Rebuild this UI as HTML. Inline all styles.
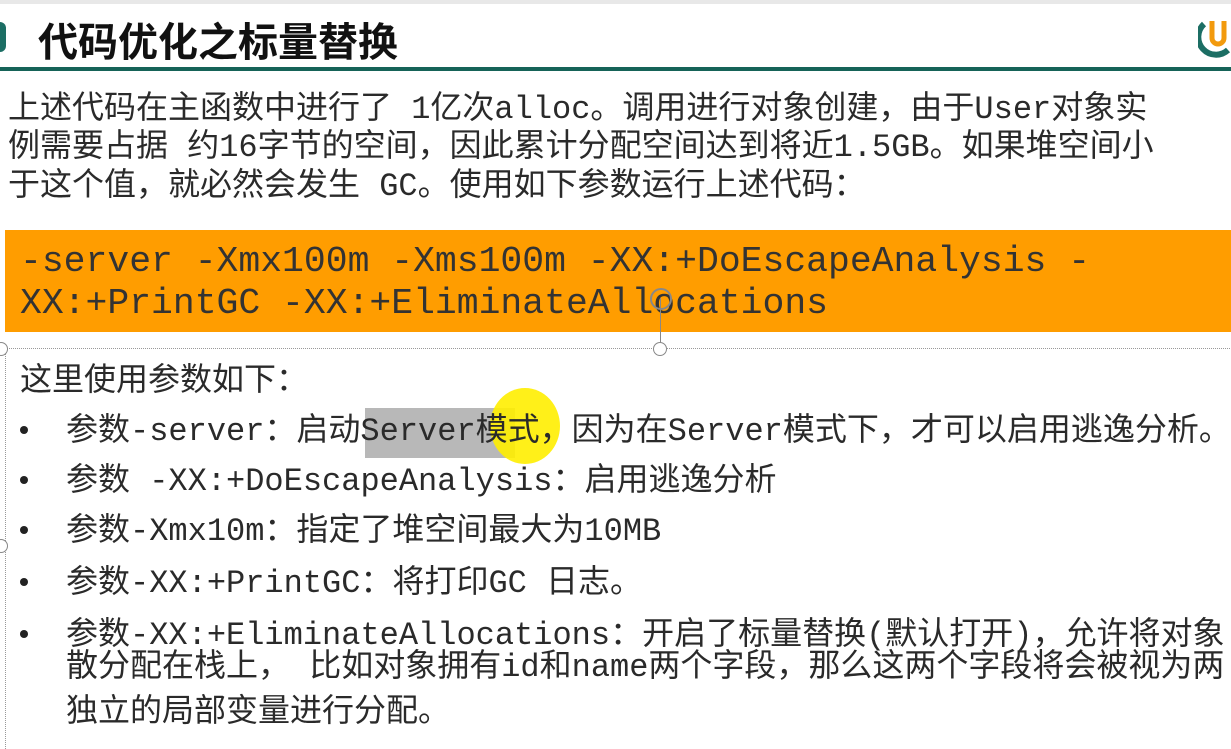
<!DOCTYPE html>
<html><head><meta charset="utf-8"><style>
body{margin:0;width:1231px;height:731px;overflow:hidden;background:#fff;position:relative;font-family:"Liberation Mono","Noto Sans CJK SC",monospace;color:#2a2a2a}
.t{position:absolute;white-space:nowrap;line-height:1.2}
.p{font-size:32px;left:8px}
.b{font-size:32px}
.dot{position:absolute;left:20px;width:8px;height:8px;border-radius:50%;background:#222}
</style></head><body>
<div style="position:absolute;left:0;top:0;width:1231px;height:4px;background:#e8e8e8"></div>
<div class="t" style="left:38px;top:10px;font:bold 40px 'Liberation Sans','Noto Sans CJK SC',sans-serif;color:#111">代码优化之标量替换</div>
<div style="position:absolute;left:0;top:67px;width:1231px;height:4px;background:#166358"></div>
<div style="position:absolute;left:0;top:22px;width:6px;height:30px;border-radius:0 10px 10px 0;background:#1c6e64"></div>
<svg style="position:absolute;left:1198px;top:16px" width="33" height="42"><path d="M6 8 A14 14 0 0 0 30 34" stroke="#1c6e64" stroke-width="6" fill="none"/><path d="M14 5 V22 A6 6 0 0 0 26 22 V5" stroke="#f29a0e" stroke-width="5" fill="none"/></svg>
<div class="t p" style="top:91px">上述代码在主函数中进行了 1亿次alloc。调用进行对象创建，由于User对象实</div>
<div class="t p" style="top:129px">例需要占据 约16字节的空间，因此累计分配空间达到将近1.5GB。如果堆空间小</div>
<div class="t p" style="top:168px">于这个值，就必然会发生 GC。使用如下参数运行上述代码：</div>
<div style="position:absolute;left:5px;top:230px;width:1226px;height:102px;background:#ff9d00"></div>
<div class="t" style="left:20px;top:240px;font-size:36.4px;color:#333">-server -Xmx100m -Xms100m -XX:+DoEscapeAnalysis -</div>
<div class="t" style="left:20px;top:282px;font-size:36.4px;color:#333">XX:+PrintGC -XX:+EliminateAllocations</div>
<div style="position:absolute;left:5px;top:348px;width:1230px;height:400px;border-top:1px dotted #999;border-left:1px dotted #999"></div>
<div style="position:absolute;left:660px;top:298px;width:1px;height:50px;background:#888"></div>
<div style="position:absolute;left:653px;top:342px;width:12px;height:12px;border:1px solid #888;border-radius:50%;background:#fff"></div>
<div style="position:absolute;left:-6px;top:342px;width:12px;height:12px;border:1px solid #888;border-radius:50%;background:#fff"></div>
<div style="position:absolute;left:-6px;top:539px;width:12px;height:12px;border:1px solid #888;border-radius:50%;background:#fff"></div>
<div style="position:absolute;left:650px;top:288px;width:18px;height:18px;border:2px solid #888;border-radius:50%;"></div>
<div class="t b" style="left:20px;top:363px">这里使用参数如下：</div>
<div style="position:absolute;left:365px;top:408px;width:150px;height:50px;background:#b8b8b8"></div>
<div style="position:absolute;left:490px;top:388px;width:70px;height:76px;border-radius:50%;background:#ffee00;opacity:.9"></div>
<div class="dot" style="top:426px"></div><div class="t b" style="left:66px;top:413px">参数-server：启动Server模式，因为在Server模式下，才可以启用逃逸分析。</div>
<div class="dot" style="top:476px"></div><div class="t b" style="left:66px;top:463px">参数 -XX:+DoEscapeAnalysis：启用逃逸分析</div>
<div class="dot" style="top:526px"></div><div class="t b" style="left:66px;top:513px">参数-Xmx10m：指定了堆空间最大为10MB</div>
<div class="dot" style="top:578px"></div><div class="t b" style="left:66px;top:565px">参数-XX:+PrintGC：将打印GC 日志。</div>
<div class="dot" style="top:630px"></div><div class="t b" style="left:66px;top:617px">参数-XX:+EliminateAllocations：开启了标量替换(默认打开)，允许将对象</div>
<div class="t b" style="left:66px;top:649px">散分配在栈上， 比如对象拥有id和name两个字段，那么这两个字段将会被视为两</div>
<div class="t b" style="left:66px;top:694px">独立的局部变量进行分配。</div>
</body></html>
